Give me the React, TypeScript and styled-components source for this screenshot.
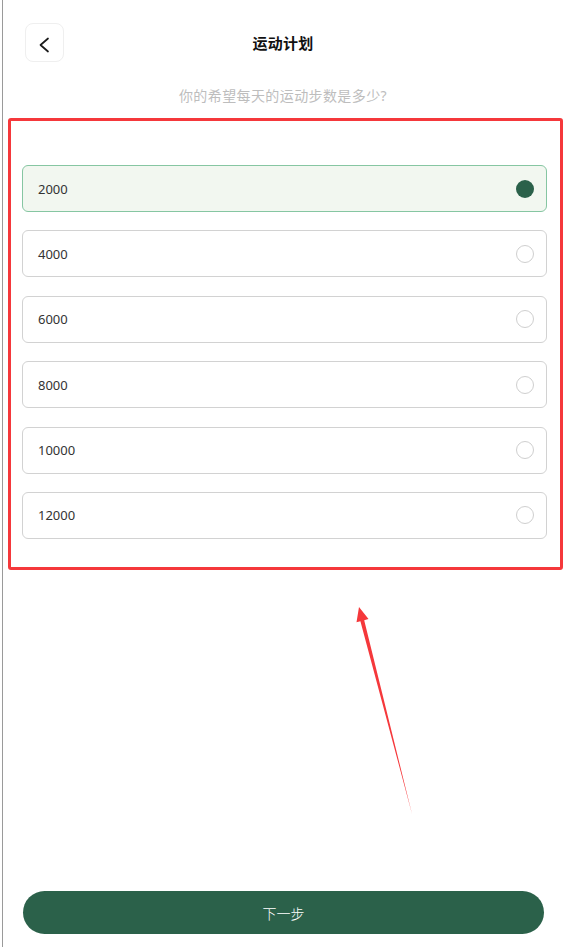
import React, { useState } from "react";
import styled, { createGlobalStyle } from "styled-components";

const GlobalStyle = createGlobalStyle`
  html, body {
    margin: 0;
    padding: 0;
    background: #fff;
  }
  body {
    font-family: "Noto Sans", "Noto Sans CJK SC", sans-serif;
  }
`;

const Page = styled.div`
  position: relative;
  display: flex;
  flex-direction: column;
  width: 566px;
  min-height: 100vh;
  box-sizing: border-box;
  background: #fff;

  &::before {
    content: "";
    position: absolute;
    left: 2px;
    top: 0;
    bottom: 0;
    width: 1px;
    background: #9a9a9a;
  }
`;

const Header = styled.div`
  display: grid;
  grid-template-columns: 1fr auto 1fr;
  align-items: center;
  height: 39px;
  margin-top: 23px;
  padding: 0 25px;
`;

const BackButton = styled.button`
  display: flex;
  align-items: center;
  justify-content: center;
  width: 39px;
  height: 39px;
  padding: 0;
  border: 1px solid #efefef;
  border-radius: 8px;
  background: #fff;
  color: #222;
  cursor: pointer;
`;

const Title = styled.h1`
  margin: 0;
  font-size: 15px;
  font-weight: 700;
  color: #111;
  letter-spacing: 0.3px;
`;

const Subtitle = styled.p`
  margin: 24px 0 0;
  text-align: center;
  font-size: 14px;
  line-height: 20px;
  letter-spacing: 0.4px;
  color: #bdbdbd;
`;

const Highlight = styled.div`
  margin: 12px 3px 0 8px;
  padding: 44px 13px 28px 11px;
  border: 3px solid #f5383b;
  border-radius: 3px;
`;

const OptionList = styled.div`
  display: flex;
  flex-direction: column;
  gap: 18.4px;
`;

const Option = styled.div<{ $active: boolean }>`
  display: flex;
  align-items: center;
  justify-content: space-between;
  height: 47px;
  box-sizing: border-box;
  padding: 0 12px 0 15px;
  border: 1px solid ${(p) => (p.$active ? "#86c6a2" : "#d2d2d2")};
  border-radius: 6px;
  background: ${(p) => (p.$active ? "#f2f7f0" : "#fff")};
  cursor: pointer;
`;

const OptionLabel = styled.span`
  font-size: 13px;
  color: #333;
`;

const Radio = styled.span<{ $active: boolean }>`
  width: 18px;
  height: 18px;
  box-sizing: border-box;
  border-radius: 50%;
  border: ${(p) => (p.$active ? "none" : "1.5px solid #cfcfcf")};
  background: ${(p) => (p.$active ? "#2b614a" : "#fff")};
`;

const Footer = styled.div`
  margin-top: auto;
  padding: 0 22px 13px 23px;
`;

const NextButton = styled.button`
  display: block;
  width: 100%;
  height: 43px;
  border: none;
  border-radius: 22px;
  background: #2b614a;
  color: #fff;
  font-family: "Noto Sans CJK SC", sans-serif;
  font-size: 14px;
  font-weight: 300;
  cursor: pointer;
`;

const Overlay = styled.svg`
  position: absolute;
  left: 0;
  top: 0;
  pointer-events: none;
`;

const steps = ["2000", "4000", "6000", "8000", "10000", "12000"];

export default function App() {
  const [selected, setSelected] = useState("2000");

  return (
    <Page>
      <GlobalStyle />
      <Header>
        <div>
          <BackButton aria-label="返回">
            <svg width="16" height="20" viewBox="0 0 16 20" fill="none">
              <path
                d="M11 5.5 L3.5 12 L11 18.5"
                stroke="#1a1a1a"
                strokeWidth="1.7"
                strokeLinecap="round"
                strokeLinejoin="round"
              />
            </svg>
          </BackButton>
        </div>
        <Title>运动计划</Title>
        <div />
      </Header>

      <Subtitle>你的希望每天的运动步数是多少?</Subtitle>

      <Highlight>
        <OptionList>
          {steps.map((s) => (
            <Option key={s} $active={s === selected} onClick={() => setSelected(s)}>
              <OptionLabel>{s}</OptionLabel>
              <Radio $active={s === selected} />
            </Option>
          ))}
        </OptionList>
      </Highlight>

      <Footer>
        <NextButton>下一步</NextButton>
      </Footer>

      <Overlay width="566" height="947" viewBox="0 0 566 947">
        <polygon points="359,607 368.5,619 364.2,620.2 412,814 360.4,621.2 356.5,622.2" fill="#f5383b" />
      </Overlay>
    </Page>
  );
}
